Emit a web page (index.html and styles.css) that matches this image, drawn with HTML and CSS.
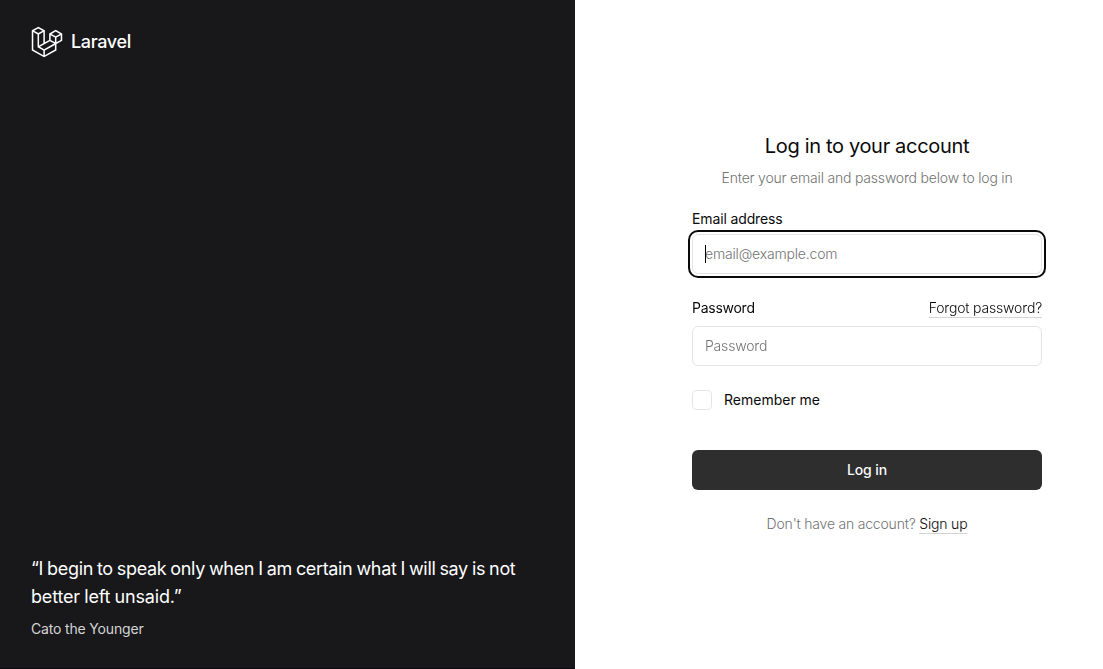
FILE: index.html
```html
<!DOCTYPE html>
<html lang="en">
  <head>
    <meta charset="utf-8">
    <meta name="viewport" content="width=device-width, initial-scale=1">
    <title>Log in - Laravel</title>
    <link rel="stylesheet" href="styles.css">
  </head>
  <body>
    <div class="auth-layout">
      <aside class="auth-aside">
        <a class="brand" href="#">
          <svg class="brand-logo" viewBox="0 0 40 42" fill="currentColor" aria-hidden="true">
            <path fill-rule="evenodd" clip-rule="evenodd" d="M17.2 5.633 8.6.855 0 5.633v26.51l16.2 9 16.2-9v-8.444l7.6-4.222V9.856l-8.6-4.777-8.6 4.777V18.3l-5.6 3.111V5.633ZM38 18.301l-5.6 3.11v-6.157l5.6-3.11V18.3Zm-1.06-7.856-5.54 3.078-5.54-3.079 5.54-3.078 5.54 3.079ZM24.8 18.3v-6.157l5.6 3.111v6.158L24.8 18.3Zm-1 1.732 5.54 3.078-13.14 7.302-5.54-3.078 13.14-7.3v-.002Zm-16.2 7.89 7.6 4.222V38.3L2 30.966V7.92l5.6 3.111v16.892ZM8.6 9.3 3.06 6.222 8.6 3.143l5.54 3.08L8.6 9.3Zm21.8 15.51-13.2 7.334V38.3l13.2-7.334v-6.156ZM9.6 11.034l5.6-3.11v14.6l-5.6 3.11v-14.6Z" />
          </svg>
          <span class="brand-name">Laravel</span>
        </a>
        <blockquote class="quote">
          <p class="quote-text">“I begin to speak only when I am certain what I will say is not <span class="quote-end">better left unsaid.”</span></p>
          <footer class="quote-author">Cato the Younger</footer>
        </blockquote>
      </aside>

      <main class="auth-main">
        <div class="auth-card">
          <header class="auth-header">
            <h1>Log in to your account</h1>
            <p>Enter your email and password below to log in</p>
          </header>

          <form class="auth-form">
            <div class="form-group">
              <label class="email-label" for="email">Email address</label>
              <input type="email" id="email" name="email" placeholder="email@example.com" autofocus>
              <span class="caret"></span>
            </div>
            <div class="form-group">
              <div class="label-row">
                <label for="password">Password</label>
                <a class="link" href="#">Forgot password?</a>
              </div>
              <input type="password" id="password" name="password" placeholder="Password">
            </div>
            <div class="remember">
              <input type="checkbox" id="remember" name="remember">
              <label for="remember">Remember me</label>
            </div>
            <button type="submit" class="btn">Log in</button>
          </form>

          <p class="signup">Don't have an account? <a class="link" href="#">Sign up</a></p>
        </div>
      </main>
    </div>
  </body>
</html>
```

FILE: styles.css
```css
:root {
  --foreground: #0a0a0a;
  --muted: #737373;
  --border: #e5e5e5;
  --dark: #18181b;
  --primary: #2e2e2e;
  --radius: 6px;
}

* {
  box-sizing: border-box;
  margin: 0;
  padding: 0;
}

body {
  font-family: Inter, sans-serif;
  font-size: 14px;
  line-height: 20px;
  letter-spacing: -0.2px;
  word-spacing: -0.1px;
  color: var(--foreground);
  background: #fff;
}

input,
button {
  font: inherit;
  letter-spacing: inherit;
  color: inherit;
}

.auth-layout {
  display: grid;
  grid-template-columns: 575px 1fr;
  height: 100vh;
  overflow: hidden;
}

/* Left panel */
.auth-aside {
  display: flex;
  flex-direction: column;
  justify-content: space-between;
  padding: 26px 30px 30px 31px;
  color: #fff;
  background: var(--dark);
  border-bottom: 1px solid #0a0a0a;
}

.brand {
  display: flex;
  align-items: center;
  gap: 8px;
  color: #fff;
  text-decoration: none;
}

.brand-logo {
  width: 32px;
  height: 32px;
}

.brand-name {
  font-size: 18px;
  font-weight: 500;
  letter-spacing: -0.36px;
}

.quote {
  display: grid;
  gap: 8px;
  margin-bottom: -1px;
}

.quote-text {
  font-size: 18px;
  line-height: 28px;
  font-weight: 430;
  letter-spacing: -0.34px;
  word-spacing: -0.7px;
}

.quote-end {
  letter-spacing: -0.16px;
}

.quote-author {
  letter-spacing: -0.15px;
  color: #d4d4d4;
}

/* Login form */
.auth-main {
  padding: 132px 61px 0 117px;
}

.auth-card {
  display: flex;
  flex-direction: column;
  gap: 24px;
}

.auth-header {
  display: grid;
  gap: 8px;
  text-align: center;
}

.auth-header h1 {
  font-size: 20px;
  line-height: 28px;
  font-weight: 430;
  letter-spacing: -0.3px;
}

.auth-header p,
.signup {
  font-weight: 350;
  letter-spacing: -0.18px;
  color: var(--muted);
}

.auth-form {
  display: flex;
  flex-direction: column;
  gap: 24px;
}

.form-group {
  display: grid;
  gap: 8px;
  position: relative;
}

label {
  font-weight: 430;
  letter-spacing: -0.26px;
  line-height: 14px;
}

.email-label {
  letter-spacing: -0.12px;
}

.label-row {
  display: flex;
  align-items: center;
  justify-content: space-between;
}

input[type="email"],
input[type="password"] {
  width: 100%;
  height: 40px;
  padding: 0 12px 1px;
  border: 1px solid var(--border);
  border-radius: var(--radius);
  background: #fff;
  caret-color: transparent;
}

input::placeholder {
  font-weight: 350;
  letter-spacing: -0.18px;
  color: var(--muted);
}

input[type="email"] {
  outline: 2px solid var(--foreground);
  outline-offset: 2px;
}

.caret {
  position: absolute;
  left: 13px;
  bottom: 11px;
  width: 1px;
  height: 18px;
  background: #000;
}

.link {
  font-weight: 350;
  letter-spacing: -0.16px;
  color: var(--foreground);
  text-decoration: underline;
  text-decoration-color: #d4d4d4;
  text-decoration-thickness: 1px;
  text-underline-offset: 4px;
}

.remember {
  display: flex;
  align-items: center;
  gap: 12px;
}

.remember label {
  letter-spacing: 0;
}

input[type="checkbox"] {
  appearance: none;
  width: 20px;
  height: 20px;
  border: 1px solid var(--border);
  border-radius: 4px;
}

.btn {
  height: 40px;
  margin-top: 16px;
  border: none;
  border-radius: var(--radius);
  font-weight: 500;
  letter-spacing: -0.1px;
  color: #fafafa;
  background: var(--primary);
}

.signup {
  text-align: center;
}
```
